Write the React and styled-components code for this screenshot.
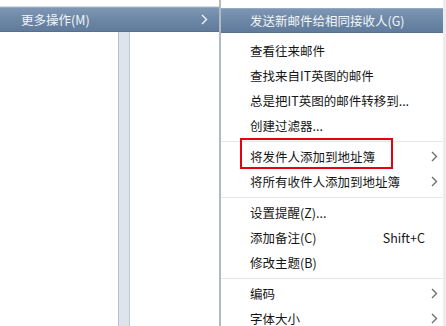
import React from "react";
import styled, { createGlobalStyle } from "styled-components";

const GlobalStyle = createGlobalStyle`
  html, body {
    margin: 0;
    padding: 0;
    background: #ffffff;
  }
  body {
    font-family: "Noto Sans CJK SC", "Noto Sans", sans-serif;
    font-size: 12.5px;
  }
`;

const items = [
  { label: "发送新邮件给相同接收人(G)", active: true },
  { gap: true },
  { label: "查看往来邮件" },
  { label: "查找来自IT英图的邮件" },
  { label: "总是把IT英图的邮件转移到..." },
  { label: "创建过滤器..." },
  { divider: true },
  { label: "将发件人添加到地址簿", arrow: true },
  { label: "将所有收件人添加到地址簿", arrow: true },
  { divider: true },
  { label: "设置提醒(Z)..." },
  { label: "添加备注(C)", shortcut: "Shift+C" },
  { label: "修改主题(B)" },
  { divider: true },
  { label: "编码", arrow: true },
  { label: "字体大小", arrow: true },
];

const Chevron = ({ color }) => (
  <svg width="7" height="11" viewBox="0 0 7 11">
    <path d="M1 1 L5.5 5.5 L1 10" fill="none" stroke={color} strokeWidth="1.4" />
  </svg>
);

const App = () => {
  return (
    <>
      <GlobalStyle />
      <Page>
        <LeftMenu>
          <TopGap />
          <Row $active $padLeft={21} $padRight={11}>
            <Label>更多操作(M)</Label>
            <Chevron color="#f4f7fa" />
          </Row>
          <LeftBody>
            <Blank $width={118} />
            <Strip />
            <Blank />
          </LeftBody>
        </LeftMenu>

        <SubMenu>
          {items.map((item, index) => {
            if (item.gap) return <Gap key={index} />;
            if (item.divider) return <Divider key={index} />;
            return (
              <Row key={index} $active={item.active} $padLeft={29} $padRight={0}>
                <Label>{item.label}</Label>
                {item.shortcut && <Shortcut>{item.shortcut}</Shortcut>}
                <ArrowSlot>{item.arrow && <Chevron color="#6e6e6e" />}</ArrowSlot>
              </Row>
            );
          })}
        </SubMenu>

        <Callout />
      </Page>
    </>
  );
};

const Page = styled.div`
  position: relative;
  display: flex;
  width: 446px;
  height: 326px;
  overflow: hidden;
  background: #ffffff;
`;

const LeftMenu = styled.div`
  display: flex;
  flex-direction: column;
  width: 219px;
  flex-shrink: 0;
`;

const TopGap = styled.div`
  height: 6px;
  border-bottom: 1px solid #dadde0;
`;

const LeftBody = styled.div`
  flex: 1;
  display: flex;
`;

const Blank = styled.div`
  width: ${(p) => (p.$width ? `${p.$width}px` : "auto")};
  flex: ${(p) => (p.$width ? "none" : "1")};
  background: #ffffff;
`;

const Strip = styled.div`
  width: 10px;
  background: #dde4eb;
  border-left: 1px solid #b7bec5;
  border-right: 1px solid #c3c9cf;
`;

const SubMenu = styled.div`
  flex: 1;
  display: flex;
  flex-direction: column;
  padding-top: 8px;
  border-left: 2px solid #b3bac1;
  border-right: 3px solid #ececec;
  background: #ffffff;
`;

const Row = styled.div`
  display: flex;
  align-items: center;
  height: 25px;
  flex-shrink: 0;
  padding-left: ${(p) => p.$padLeft}px;
  padding-right: ${(p) => p.$padRight}px;
  color: ${(p) => (p.$active ? "#f2f5f8" : "#161616")};
  background: ${(p) =>
    p.$active
      ? "linear-gradient(#7f98b4, #6e89a8 45%, #5f7a9a)"
      : "transparent"};
  box-shadow: ${(p) =>
    p.$active ? "inset 0 1px 0 #94aac2, inset 0 -1px 0 #57708e" : "none"};
`;

const Label = styled.span`
  flex: 1;
  white-space: nowrap;
  line-height: 25px;
`;

const Shortcut = styled.span`
  white-space: nowrap;
  margin-right: 0;
`;

const ArrowSlot = styled.span`
  width: 18px;
  display: flex;
  justify-content: flex-end;
  padding-right: 5px;
  box-sizing: border-box;
`;

const Gap = styled.div`
  height: 5px;
  flex-shrink: 0;
`;

const Divider = styled.div`
  height: 1px;
  flex-shrink: 0;
  margin: 3px 0 2px;
  background: #e6e6e6;
`;

const Callout = styled.div`
  position: absolute;
  left: 240px;
  top: 138px;
  width: 149px;
  height: 27px;
  border: 2px solid #e60012;
  pointer-events: none;
`;

export default App;
